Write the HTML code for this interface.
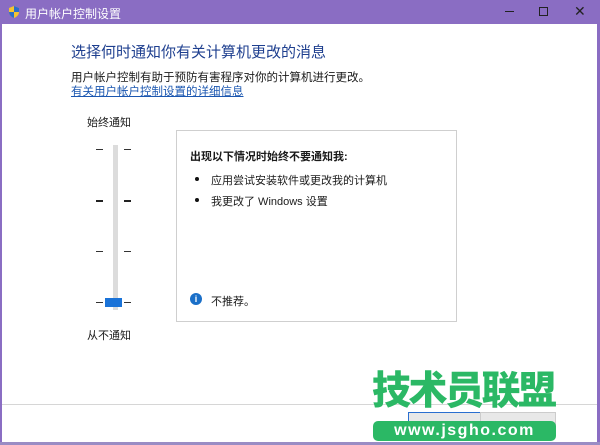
<!DOCTYPE html>
<html><head><meta charset="utf-8"><style>
*{margin:0;padding:0;box-sizing:border-box}
body{width:600px;height:445px;background:#fff;position:relative;overflow:hidden;font-family:"Liberation Sans","Microsoft YaHei","Noto Sans CJK SC",sans-serif;color:#1a1a1a}
.a{position:absolute}
.t{font-size:12px;white-space:nowrap}
</style></head><body>
<div class="a" style="left:0;top:0;width:600px;height:24px;background:#8a6dc3"></div>
<div class="a" style="left:0;top:0;width:2px;height:445px;background:#8a6dc3"></div>
<div class="a" style="left:597px;top:0;width:3px;height:445px;background:#8a6dc3"></div>
<div class="a" style="left:0;top:442px;width:600px;height:3px;background:#9a8cc4"></div>
<svg class="a" style="left:7px;top:5px" width="14" height="14" viewBox="0 0 14 14"><path d="M7 1 L12 3 V7 C12 10 9.5 12 7 13 C4.5 12 2 10 2 7 V3 Z" fill="#f4c430"/><path d="M7 1 L12 3 V7 H7 Z M2 7 H7 V13 C4.5 12 2 10 2 7 Z" fill="#2c6fc8"/></svg>
<div class="a t" style="left:25px;top:5px;color:#fff">用户帐户控制设置</div>
<div class="a" style="left:505px;top:11px;width:9px;height:1px;background:#222"></div>
<div class="a" style="left:539px;top:7px;width:9px;height:9px;border:1px solid #222"></div>
<div class="a t" style="left:574px;top:3px;font-size:14px;color:#222">✕</div>
<div class="a t" style="left:71px;top:41px;font-size:15px;color:#1e3f8f">选择何时通知你有关计算机更改的消息</div>
<div class="a t" style="left:71px;top:69px;font-size:11.5px">用户帐户控制有助于预防有害程序对你的计算机进行更改。</div>
<div class="a t" style="left:71px;top:83px;font-size:11.5px;color:#1a56b0;text-decoration:underline">有关用户帐户控制设置的详细信息</div>
<div class="a t" style="left:87px;top:114px;font-size:11px">始终通知</div>
<div class="a" style="left:113px;top:145px;width:5px;height:165px;background:#dcdcdc"></div>
<div class="a" style="left:96px;top:149px;width:7px;height:1px;background:#333"></div><div class="a" style="left:124px;top:149px;width:7px;height:1px;background:#333"></div>
<div class="a" style="left:96px;top:200px;width:7px;height:2px;background:#222"></div><div class="a" style="left:124px;top:200px;width:7px;height:2px;background:#222"></div>
<div class="a" style="left:96px;top:251px;width:7px;height:1px;background:#333"></div><div class="a" style="left:124px;top:251px;width:7px;height:1px;background:#333"></div>
<div class="a" style="left:96px;top:302px;width:7px;height:1px;background:#333"></div><div class="a" style="left:124px;top:302px;width:7px;height:1px;background:#333"></div>
<div class="a" style="left:105px;top:298px;width:17px;height:9px;background:#1a73d8"></div>
<div class="a t" style="left:87px;top:327px;font-size:11px">从不通知</div>
<div class="a" style="left:176px;top:130px;width:281px;height:192px;border:1px solid #cfcfcf"></div>
<div class="a t" style="left:190px;top:148px;font-size:11px;font-weight:bold">出现以下情况时始终不要通知我:</div>
<div class="a" style="left:195px;top:177px;width:4px;height:4px;border-radius:50%;background:#111"></div>
<div class="a t" style="left:211px;top:172px;font-size:11px">应用尝试安装软件或更改我的计算机</div>
<div class="a" style="left:195px;top:198px;width:4px;height:4px;border-radius:50%;background:#111"></div>
<div class="a t" style="left:211px;top:193px;font-size:11px">我更改了 Windows 设置</div>
<div class="a" style="left:190px;top:293px;width:12px;height:12px;border-radius:50%;background:#1a6fc8;color:#fff;font-size:9px;font-weight:bold;text-align:center;line-height:12px">i</div>
<div class="a t" style="left:211px;top:293px;font-size:11px">不推荐。</div>
<div class="a" style="left:2px;top:404px;width:595px;height:1px;background:#d6d6d6"></div>
<div class="a" style="left:408px;top:412px;width:76px;height:22px;border:1px solid #2a6fd0;background:#e8e8e8"></div>
<div class="a" style="left:480px;top:412px;width:76px;height:22px;border:1px solid #ccc;background:#e8e8e8"></div>
<div class="a t" style="left:372px;top:370px;font-size:39px;font-weight:900;color:#2bb865;letter-spacing:-2.5px;line-height:44px">技术员联盟</div>
<div class="a" style="left:373px;top:421px;width:183px;height:20px;border-radius:5px;background:#2bb865;color:#fff;font-size:16px;font-weight:bold;text-align:center;line-height:20px;letter-spacing:1.5px">www.jsgho.com</div>
</body></html>
